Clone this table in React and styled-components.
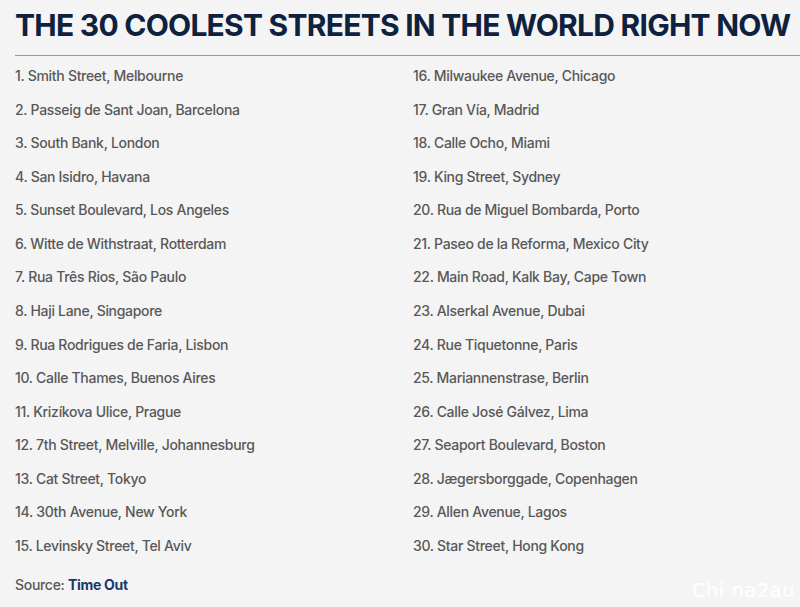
import React from "react";
import styled, { createGlobalStyle } from "styled-components";

const Global = createGlobalStyle`
  html, body { margin: 0; padding: 0; background: #f4f4f4; }
  body { font-family: Inter, "Noto Sans", sans-serif; }
`;

const Page = styled.div`
  width: 800px;
  height: 607px;
  background: #f4f4f4;
  position: relative;
  overflow: hidden;
`;

const Title = styled.h1`
  margin: 0;
  padding: 7px 0 0 15px;
  font-size: 30px;
  line-height: 36px;
  font-weight: 700;
  color: #0e2240;
  letter-spacing: -0.75px;
  white-space: nowrap;
`;

const Rule = styled.hr`
  margin: 12px 0 0 15px;
  border: none;
  border-top: 1px solid #8d98a8;
`;

const List = styled.ol`
  list-style: none;
  margin: 0;
  padding: 10px 0 0 15px;
  display: grid;
  grid-template-columns: 398px 1fr;
  grid-template-rows: repeat(15, 33.57px);
  grid-auto-flow: column;
`;

const Item = styled.li`
  font-size: 14px;
  line-height: 20px;
  color: #585858;
  font-weight: 500;
  letter-spacing: -0.3px;
`;

const Source = styled.p`
  margin: 6px 0 0 15px;
  font-size: 14px;
  line-height: 20px;
  color: #585858;
  font-weight: 500;
  letter-spacing: -0.3px;
`;

const SourceLink = styled.span`
  color: #17376b;
  font-weight: 700;
`;

const Watermark = styled.span`
  position: absolute;
  right: 5px;
  bottom: 5px;
  font-family: "DejaVu Sans", sans-serif;
  font-size: 19.5px;
  color: #ffffff;
  letter-spacing: 0.5px;
`;

const streets = [
  "Smith Street, Melbourne",
  "Passeig de Sant Joan, Barcelona",
  "South Bank, London",
  "San Isidro, Havana",
  "Sunset Boulevard, Los Angeles",
  "Witte de Withstraat, Rotterdam",
  "Rua Três Rios, São Paulo",
  "Haji Lane, Singapore",
  "Rua Rodrigues de Faria, Lisbon",
  "Calle Thames, Buenos Aires",
  "Krizíkova Ulice, Prague",
  "7th Street, Melville, Johannesburg",
  "Cat Street, Tokyo",
  "30th Avenue, New York",
  "Levinsky Street, Tel Aviv",
  "Milwaukee Avenue, Chicago",
  "Gran Vía, Madrid",
  "Calle Ocho, Miami",
  "King Street, Sydney",
  "Rua de Miguel Bombarda, Porto",
  "Paseo de la Reforma, Mexico City",
  "Main Road, Kalk Bay, Cape Town",
  "Alserkal Avenue, Dubai",
  "Rue Tiquetonne, Paris",
  "Mariannenstrase, Berlin",
  "Calle José Gálvez, Lima",
  "Seaport Boulevard, Boston",
  "Jægersborggade, Copenhagen",
  "Allen Avenue, Lagos",
  "Star Street, Hong Kong",
];

export default function App() {
  return (
    <Page>
      <Global />
      <Title>THE 30 COOLEST STREETS IN THE WORLD RIGHT NOW</Title>
      <Rule />
      <List>
        {streets.map((s, i) => (
          <Item key={i}>{`${i + 1}. ${s}`}</Item>
        ))}
      </List>
      <Source>
        Source: <SourceLink>Time Out</SourceLink>
      </Source>
      <Watermark>Chi na2au</Watermark>
    </Page>
  );
}
